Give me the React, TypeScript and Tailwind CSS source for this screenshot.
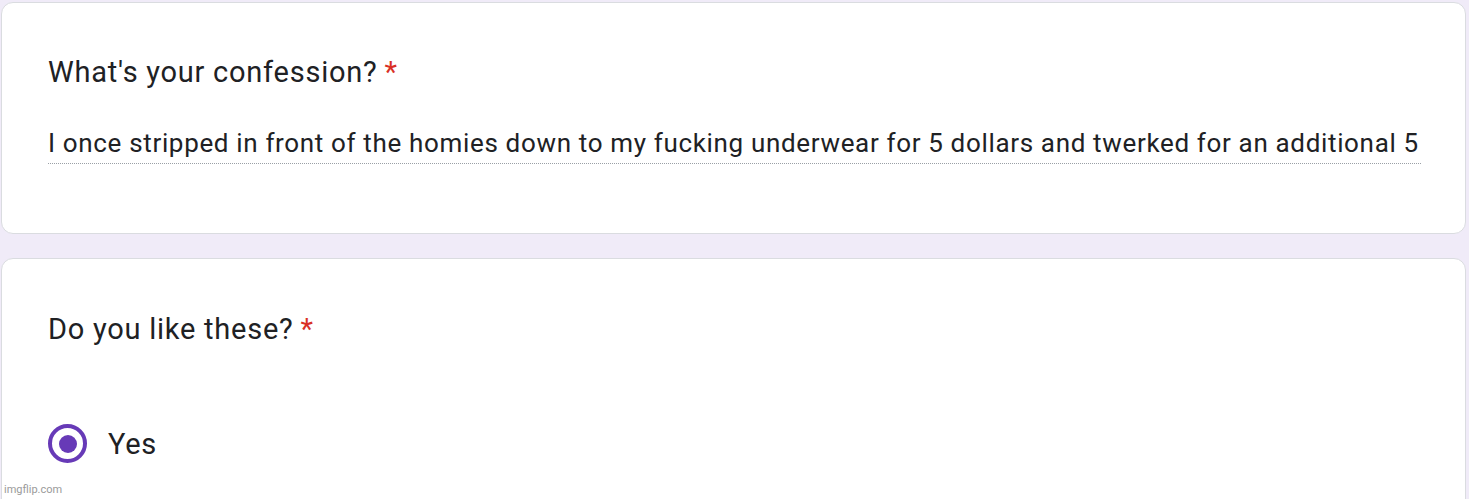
import React from "react";

export default function App() {
  const font = { fontFamily: "Roboto, 'Liberation Sans', Arial, sans-serif" };
  return (
    <div
      className="w-[1469px] h-[499px] overflow-hidden bg-[#f0ebf8] pt-[2px] pl-[1px] pr-[3px] relative"
      style={font}
    >
      <div className="h-[232px] rounded-[12px] border border-[#dadce0] bg-white pl-[46px] pr-[44px] pt-[51px]">
        <div className="text-[29px] leading-[36px] tracking-[0.75px] text-[#202124]">
          What's your confession?<span className="text-[#d93025] ml-[7px]">*</span>
        </div>
        <div className="mt-[37px] text-[26px] leading-[32px] tracking-[0.66px] text-[#202124] pb-[4px] border-b border-dotted border-[#9aa0a6] whitespace-nowrap">
          I once stripped in front of the homies down to my fucking underwear for 5 dollars and twerked for an additional 5
        </div>
      </div>
      <div className="mt-[24px] h-[300px] rounded-[12px] border border-[#dadce0] bg-white pl-[46px] pt-[52px]">
        <div className="text-[29px] leading-[36px] tracking-[0.75px] text-[#202124]">
          Do you like these?<span className="text-[#d93025] ml-[7px]">*</span>
        </div>
        <div className="mt-[77px] flex items-center gap-[21px]">
          <div className="w-[39px] h-[39px] rounded-full border-[4px] border-[#673ab7] flex items-center justify-center">
            <div className="w-[18px] h-[18px] rounded-full bg-[#673ab7]" />
          </div>
          <div className="text-[29px] leading-[36px] tracking-[0.75px] text-[#202124]">Yes</div>
        </div>
      </div>
      <div className="absolute left-[4px] bottom-[3px] text-[11px] leading-[12px] text-[#9a9a9a]">
        imgflip.com
      </div>
    </div>
  );
}
